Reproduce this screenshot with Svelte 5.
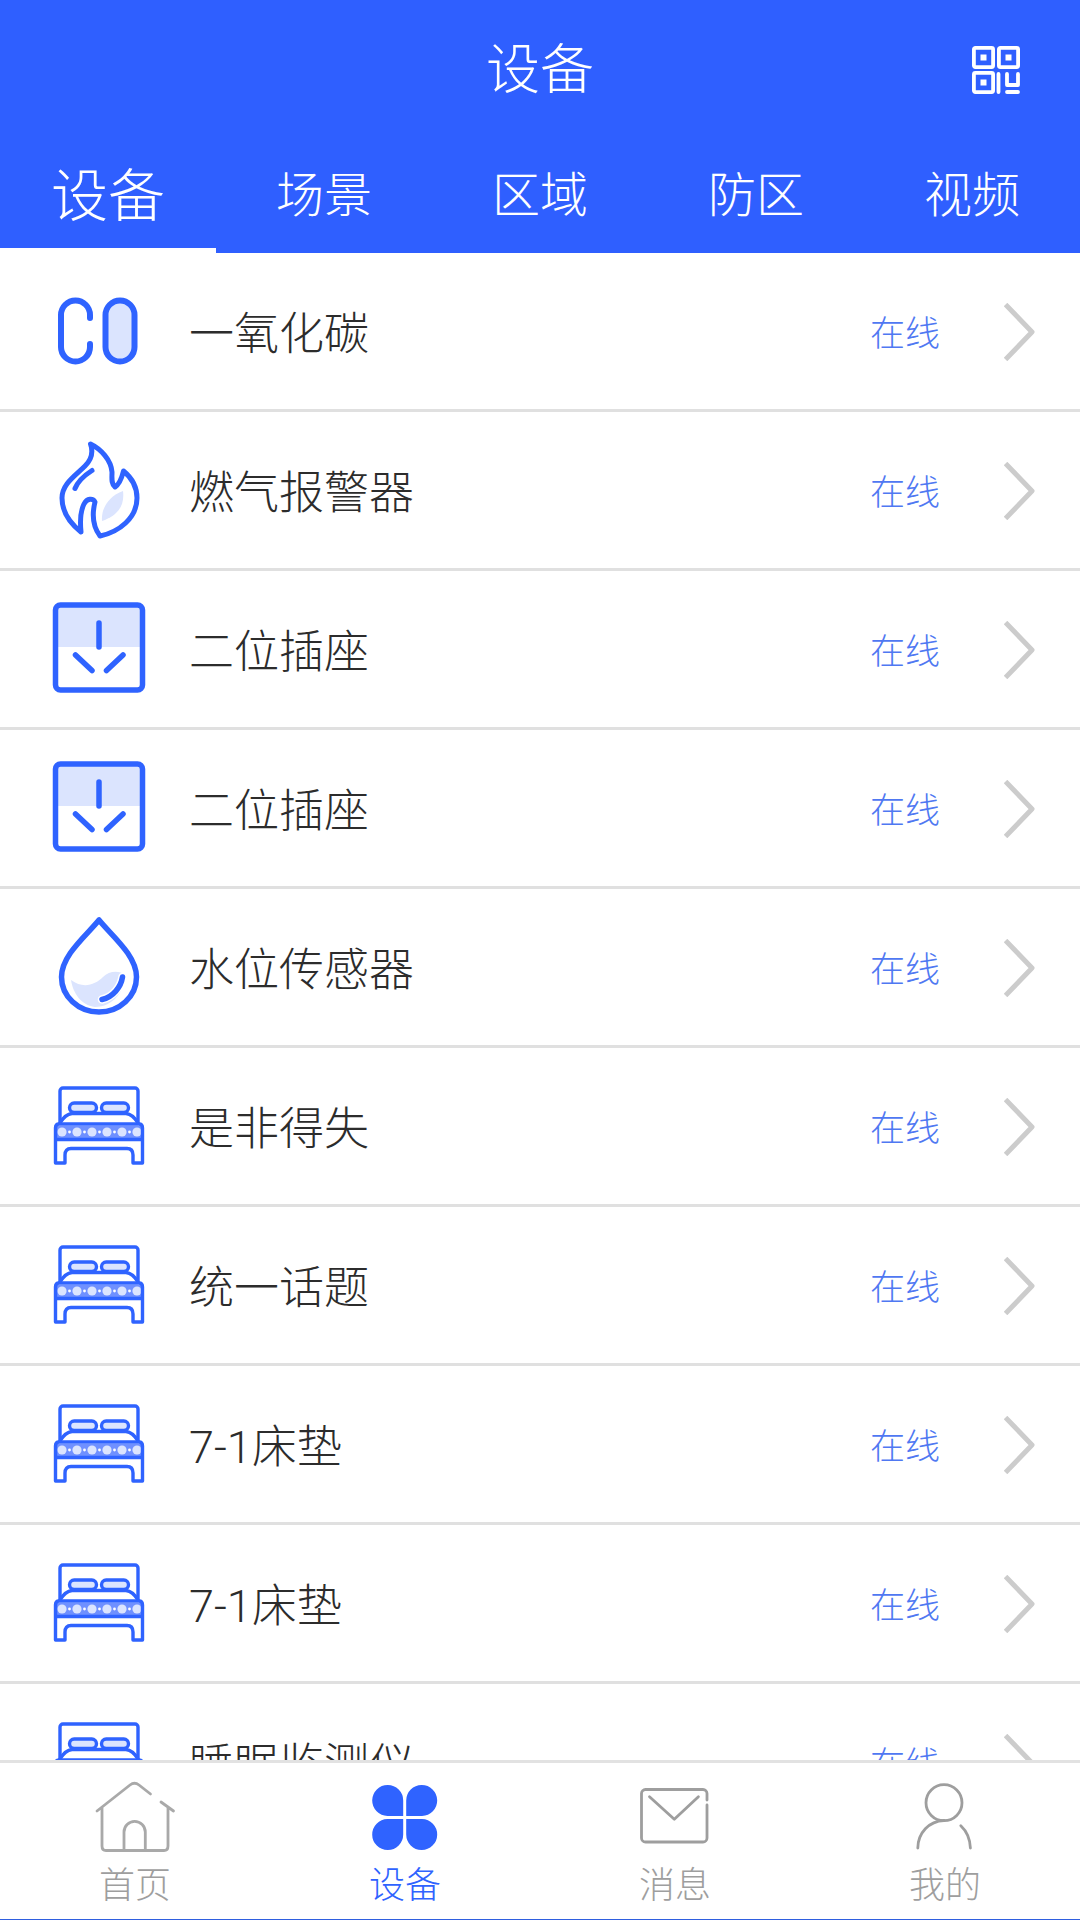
<script>
  const tabs = ['设备', '场景', '区域', '防区', '视频'];
  const rows = [
    ['co', '一氧化碳'], ['fire', '燃气报警器'], ['socket', '二位插座'], ['socket', '二位插座'],
    ['drop', '水位传感器'], ['bed', '是非得失'], ['bed', '统一话题'], ['bed', '7-1床垫'],
    ['bed', '7-1床垫'], ['bed', '睡眠监测仪']
  ];
  const dots = [13, 28, 43, 58, 73, 88];
  const gaps = [20.5, 35.5, 50.5, 65.5, 80.5];
  const nav = [['home', '首页'], ['grid', '设备'], ['mail', '消息'], ['user', '我的']];
</script>

<div class="screen">
  <header class="header">
    <div class="titlebar">
      <span></span>
      <h1 class="title">设备</h1>
      <svg class="qr" viewBox="0 0 48 48" width="48" height="48" fill="none" stroke="#fff" stroke-width="3.8" stroke-linecap="round" stroke-linejoin="round">
        <rect x="1.9" y="1.9" width="19.2" height="19.2" rx="1.5" />
        <rect x="26.9" y="1.9" width="19.2" height="19.2" rx="1.5" />
        <rect x="1.9" y="26.9" width="19.2" height="19.2" rx="1.5" />
        <rect x="8.5" y="8.5" width="6" height="6" fill="#fff" stroke="none" />
        <rect x="33.5" y="8.5" width="6" height="6" fill="#fff" stroke="none" />
        <rect x="8.5" y="33.5" width="6" height="6" fill="#fff" stroke="none" />
        <path d="M26.5 28v18M35 28v11H46V28M35 46H46" />
      </svg>
    </div>
    <nav class="tabs">
      {#each tabs as t, i}
        <div class="tab" class:active={i === 0}>{t}</div>
      {/each}
    </nav>
  </header>

  <main class="list">
    {#each rows as [icon, name]}
      <div class="row">
        <svg class="icon" viewBox="0 0 100 100" width="100" height="100" fill="none" stroke="#2f63ff" stroke-linecap="round" stroke-linejoin="round">
          {#if icon === 'co'}
            <g stroke-width="6">
              <path d="M41 37V34A14.5 14.5 0 0 0 12 34V66A14.5 14.5 0 0 0 41 66V63" />
              <rect x="56.5" y="19.5" width="29" height="61" rx="14.5" fill="#dbe4fe" />
            </g>
          {:else if icon === 'fire'}
            <path d="M74 51C76 66 68 76 53 81C52 68 60 56 74 51Z" fill="#dbe4fe" stroke="none" />
            <g stroke-width="5">
              <path d="M41.5 4C52 9 62 20 63 32C63 38 62 44 66 47C71 44 73 37 74.5 31C83 38 88 48 88 58C88 78 70 92 51 96C45 88 42 78 46 62C44 58 38 58 35 64C31 72 31 82 32 92C22 84 13 72 13 58C13 44 26 36 36 26C43 19 44 11 41.5 4Z" />
              <path d="M43 30.5C36 35 29 41 26 48.5" />
            </g>
          {:else if icon === 'socket'}
            <rect x="6.5" y="6" width="87" height="42" fill="#dbe4fe" stroke="none" />
            <g stroke-width="5.5">
              <rect x="6.5" y="6" width="87" height="85" rx="5" />
              <path d="M50 24V48M26.5 56L43 71.5M74 56L57.5 71.5" />
            </g>
          {:else if icon === 'drop'}
            <path d="M22 63C34 72 46 68 54 60C60 54 70 53 76 58C76 74 64 90 46 90C32 88 24 76 22 63Z" fill="#dbe4fe" stroke="none" />
            <g stroke-width="5.5">
              <path d="M50 3C38 18 12.5 38 12.5 60A37.5 35 0 0 0 87.5 60C87.5 38 62 18 50 3Z" />
              <path d="M73.5 60C72 70 64 80 53 82.5" stroke="#fff" stroke-width="8.5" />
              <path d="M73.5 60C72 70 64 80 53 82.5" />
            </g>
          {:else}
            <rect x="7" y="50" width="86" height="12" fill="#6f90ff" stroke="none" />
            {#each dots as x}
              <circle cx={x} cy="56" r="4.6" fill="#dbe4fe" stroke="none" />
            {/each}
            {#each gaps as x}
              <circle cx={x} cy="56" r="1.4" fill="#fff" stroke="none" />
            {/each}
            <g stroke-width="3.4">
              <path d="M11 47V15A3 3 0 0 1 14 12H86A3 3 0 0 1 89 15V47" />
              <rect x="20.5" y="27" width="27" height="9.5" rx="4.7" fill="#dbe4fe" />
              <rect x="52.5" y="27" width="27" height="9.5" rx="4.7" fill="#dbe4fe" />
              <path d="M11 47C14 42 18 38 23 37.5H77C82 38 86 42 89 47" />
              <path d="M6.5 87V52Q6.5 48 10 48H90Q93.5 48 93.5 52V87H84V79Q84 72.5 78 72.5H22Q16 72.5 16 79V87ZM6.5 63.5H93.5" stroke-linecap="butt" />
            </g>
          {/if}
        </svg>
        <span class="name">{name}</span>
        <span class="status">在线</span>
        <svg class="chev" viewBox="0 0 31 58" width="31" height="58" fill="none" stroke="#cccccc" stroke-width="5">
          <path d="M1.5 1.5L28 29L1.5 56.5" stroke-linejoin="round" />
        </svg>
      </div>
    {/each}
  </main>

  <footer class="tabbar">
    {#each nav as [icon, label], i}
      <div class="navitem" class:on={i === 1}>
        <svg viewBox="0 0 90 80" width="90" height="80" fill="none" stroke="#a9a9a9" stroke-width="2.8" stroke-linecap="round" stroke-linejoin="round">
          {#if icon === 'home'}
            <path d="M7 33L40 7Q44.5 3.5 49 7L60.5 16M71 24L83.5 33M12 30V68Q12 72.5 16 72.5H74Q78 72.5 78 68V30M34 72V54A10.6 10.6 0 0 1 55.3 54V72" />
          {:else if icon === 'grid'}
            <g fill="#2f63ff" stroke="none">
              <path d="M43.2 38H27.5A15.5 15.5 0 1 1 43.2 22.5Z" />
              <path d="M46.2 38H62A15.5 15.5 0 1 0 46.2 22.5Z" />
              <path d="M43.2 41H27.5A15.5 15.5 0 1 0 43.2 56.5Z" />
              <path d="M46.2 41H62A15.5 15.5 0 1 1 46.2 56.5Z" />
            </g>
          {:else if icon === 'mail'}
            <g stroke="#9e9e9e">
              <path d="M77 27V60A4 4 0 0 1 73 64H15.5A4 4 0 0 1 11.5 60V15.5A4 4 0 0 1 15.5 11.5H73A4 4 0 0 1 77 15.5V22" />
              <path d="M19.5 18.7L44.3 41.3L68.4 18.7" />
            </g>
          {:else}
            <g stroke="#9e9e9e">
              <circle cx="44" cy="24.7" r="18" />
              <path d="M17.8 70C18 55 29 43 44 42.5M60.8 47.7C66.5 53 70 60 70.4 70" />
            </g>
          {/if}
        </svg>
        <span class="label">{label}</span>
      </div>
    {/each}
  </footer>
</div>

<style>
  :global(body) {
    margin: 0;
    background: #fff;
  }
  .screen {
    width: 1080px;
    height: 1920px;
    display: flex;
    flex-direction: column;
    overflow: hidden;
    background: #fff;
    font-family: Roboto, "Noto Sans CJK SC", sans-serif;
    font-weight: 300;
  }
  .header {
    background: #2f5fff;
    color: #fff;
    flex: none;
  }
  .titlebar {
    height: 140px;
    display: grid;
    grid-template-columns: 1fr auto 1fr;
    align-items: center;
  }
  .title {
    margin: 0;
    padding-top: 2px;
    font-size: 54px;
    font-weight: 300;
    line-height: 136px;
  }
  .qr {
    justify-self: end;
    margin-right: 60px;
  }
  .tabs {
    display: grid;
    grid-template-columns: repeat(5, 1fr);
    height: 113px;
  }
  .tab {
    display: flex;
    align-items: center;
    justify-content: center;
    padding-bottom: 6px;
    font-size: 48px;
    border-bottom: 5px solid transparent;
  }
  .tab.active {
    font-size: 57px;
    border-bottom-color: #fff;
  }
  .list {
    flex: 1;
    min-height: 0;
    overflow: hidden;
  }
  .row {
    height: 156px;
    border-bottom: 3px solid #e0e0e0;
    padding: 0 45px 0 49px;
    display: flex;
    align-items: center;
  }
  .icon {
    flex: none;
  }
  .name {
    margin-left: 40px;
    margin-bottom: 2px;
    font-size: 45px;
    color: #2c2c2c;
  }
  .status {
    margin-left: auto;
    margin-right: 64px;
    margin-bottom: 2px;
    font-size: 35px;
    color: #4f78f2;
  }
  .chev {
    flex: none;
    margin-top: 2px;
  }
  .tabbar {
    flex: none;
    height: 156px;
    border-top: 3px solid #e2e2e2;
    border-bottom: 1px solid #2f5fdf;
    display: grid;
    grid-template-columns: repeat(4, 1fr);
    background: #fff;
  }
  .navitem {
    display: flex;
    flex-direction: column;
    align-items: center;
    padding-top: 15px;
    color: #9e9e9e;
  }
  .navitem.on {
    color: #2f63ff;
  }
  .label {
    font-size: 36px;
    line-height: 40px;
    margin-top: 8px;
  }
</style>
